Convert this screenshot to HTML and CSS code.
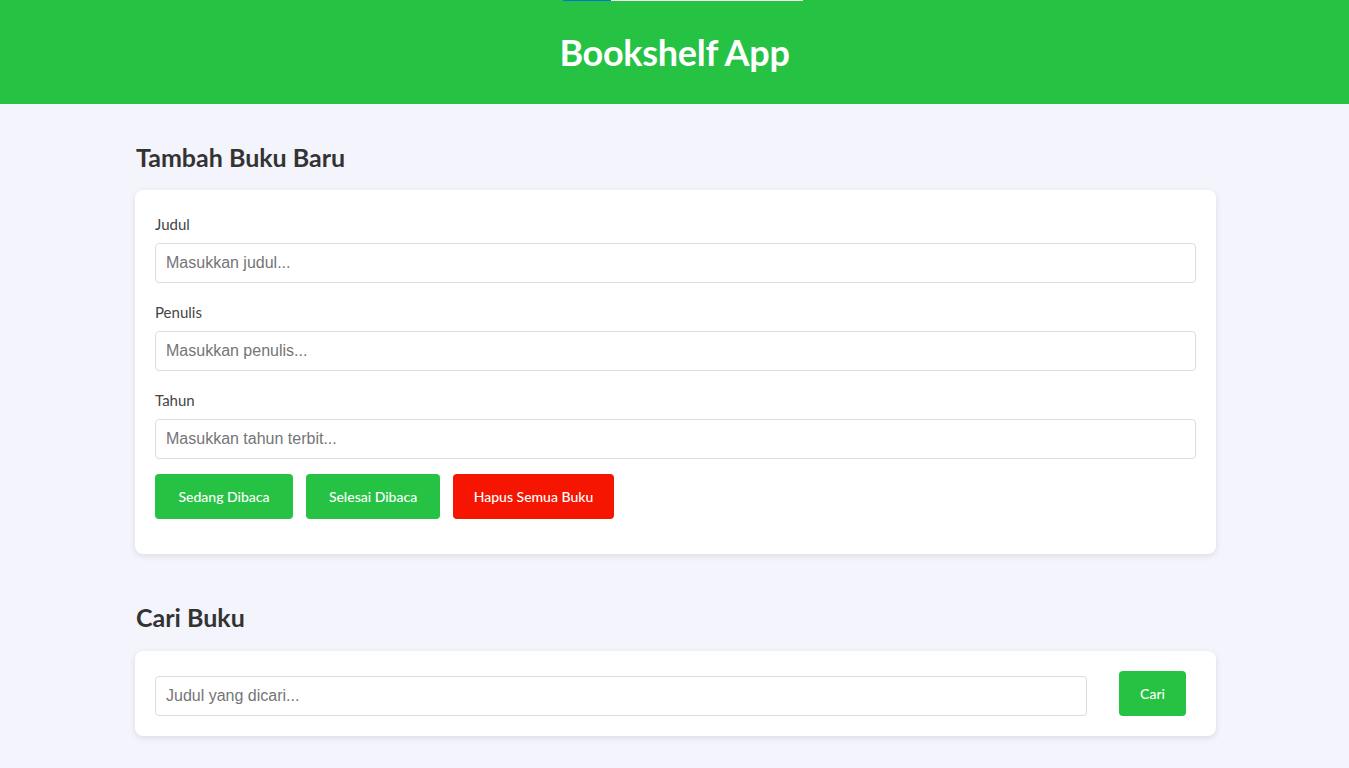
FILE: index.html
```html
<!DOCTYPE html>
<html lang="id">
<head>
<meta charset="utf-8">
<title>Bookshelf App</title>
<link rel="stylesheet" href="styles.css">
</head>
<body>
<header class="app-header">
  <div class="top-progress"><span class="top-progress-fill"></span></div>
  <h1 class="app-title">Bookshelf App</h1>
</header>
<main class="main">
  <section class="section">
    <h2 class="section-title">Tambah Buku Baru</h2>
    <form class="card form-card">
      <div class="field">
        <label class="field-label" for="judul">Judul</label>
        <input class="text-input" id="judul" type="text" placeholder="Masukkan judul...">
      </div>
      <div class="field">
        <label class="field-label" for="penulis">Penulis</label>
        <input class="text-input" id="penulis" type="text" placeholder="Masukkan penulis...">
      </div>
      <div class="field">
        <label class="field-label" for="tahun">Tahun</label>
        <input class="text-input" id="tahun" type="text" placeholder="Masukkan tahun terbit...">
      </div>
      <div class="actions">
        <button type="button" class="btn btn-green btn-reading">Sedang Dibaca</button>
        <button type="button" class="btn btn-green btn-done">Selesai Dibaca</button>
        <button type="button" class="btn btn-red btn-clear">Hapus Semua Buku</button>
      </div>
    </form>
  </section>
  <section class="section">
    <h2 class="section-title search-title">Cari Buku</h2>
    <form class="card search-card">
      <input class="text-input search-input" type="text" placeholder="Judul yang dicari...">
      <button type="button" class="btn btn-green btn-search">Cari</button>
    </form>
  </section>
</main>
</body>
</html>
```
FILE: styles.css
```css
* { box-sizing: border-box; }
html, body { margin: 0; padding: 0; }
body {
  background: #f3f4fc;
  font-family: Lato, "Noto Sans", sans-serif;
  color: #333333;
}
.app-header {
  background: #25c244;
  height: 104px;
  display: flex;
  flex-direction: column;
  align-items: center;
}
.top-progress {
  width: 240px;
  height: 1px;
  margin-left: 16px;
  background: #f2f2f2;
  display: flex;
}
.top-progress-fill {
  width: 48px;
  height: 1px;
  background: #0a73d9;
}
.app-title {
  margin: 0;
  padding-top: 29px;
  font-size: 36px;
  line-height: 44px;
  font-weight: 700;
  color: #ffffff;
  letter-spacing: -0.3px;
}
.main {
  width: 1081px;
  margin: 0 0 0 calc(50% - 539.5px);
  padding-top: 38px;
}
.section { margin-bottom: 48px; }
.section-title {
  margin: 0 0 18px 1px;
  font-size: 25px;
  line-height: 30px;
  font-weight: 700;
  color: #333333;
}
.search-title { margin-bottom: 19px; }
.card {
  background: #ffffff;
  border-radius: 8px;
  box-shadow: 0 2px 6px rgba(0, 0, 0, 0.1);
}
.form-card {
  padding: 25px 20px 35px;
  display: flex;
  flex-direction: column;
  gap: 20px;
}
.field {
  display: flex;
  flex-direction: column;
  gap: 9px;
}
.field-label {
  font-size: 15px;
  line-height: 19px;
  color: #444444;
}
.text-input {
  height: 40px;
  width: 100%;
  border: 1px solid #dddddd;
  border-radius: 4px;
  padding: 0 10px;
  font-family: "Liberation Sans", Arial, sans-serif;
  font-size: 16px;
  color: #333333;
  background: #ffffff;
}
.text-input::placeholder { color: #757575; }
.actions {
  display: flex;
  gap: 13px;
  margin-top: -5px;
}
.btn {
  height: 45px;
  border: none;
  border-radius: 4px;
  color: #ffffff;
  font-family: Lato, "Noto Sans", sans-serif;
  font-size: 14px;
  font-weight: 500;
  padding: 0;
  cursor: pointer;
}
.btn-green { background: #25c244; }
.btn-red { background: #f61500; }
.btn-reading { width: 138px; }
.btn-done { width: 134px; }
.btn-clear { width: 161px; }
.search-card {
  padding: 20px 30px 20px 20px;
  display: flex;
  align-items: flex-end;
  gap: 32px;
}
.search-input { flex: 1; }
.btn-search { width: 67px; flex: none; }
```
